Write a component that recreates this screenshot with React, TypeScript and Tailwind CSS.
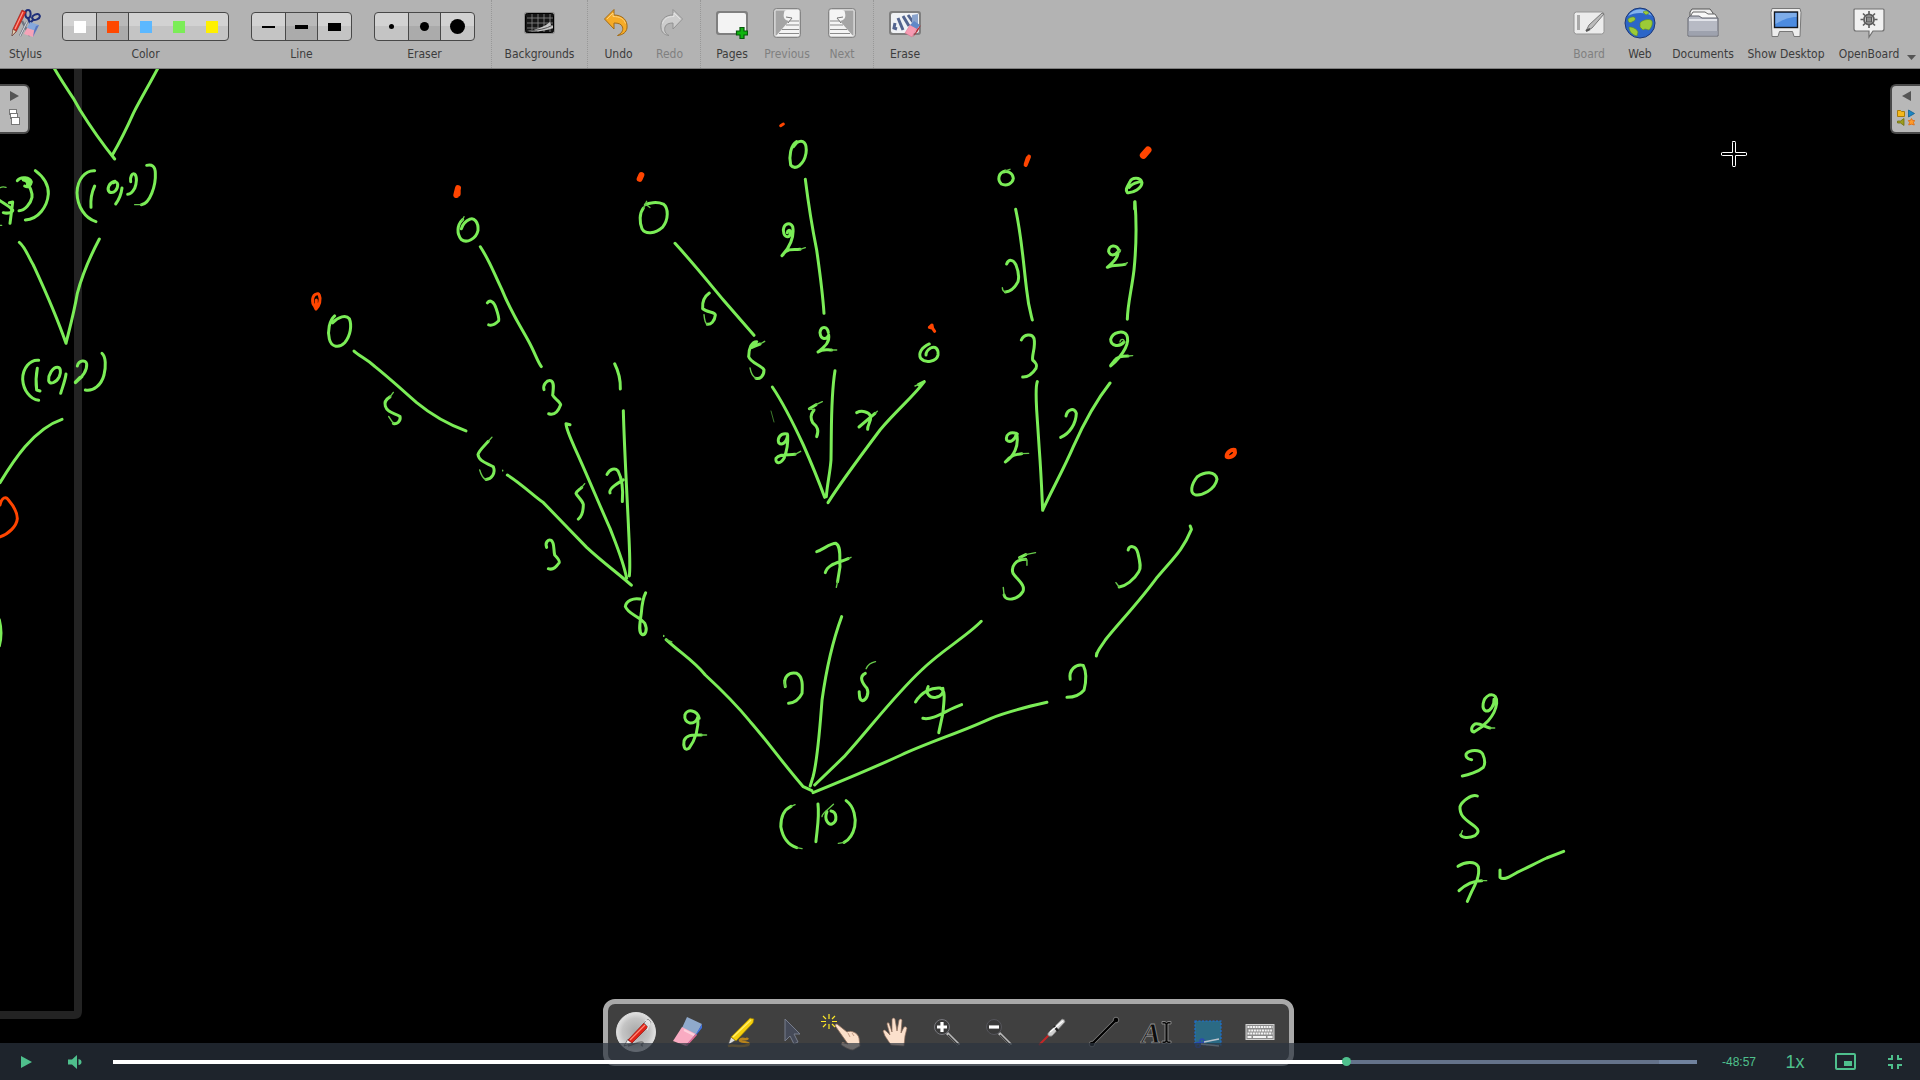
import type { ReactNode } from "react";

const GREEN = "#7bed57";
const RED = "#ff4500";

type Ink = { frame: string; green: string[]; thin?: string[]; red?: { d: string; w: number }[] };

const INK: Ink[] = [
  {
    frame: "translate(0 60) scale(.33333)",
    green: [
      "M160 20C180 55 200 85 220 115L240 150C265 190 290 230 344 297",
      "M476 20C450 70 420 120 400 160C380 205 360 245 337 285",
      "M0 422C15 432 30 440 38 450C40 456 25 462 10 458M28 428L38 426Q34 460 30 490",
      "M52 362C62 348 90 352 94 366C92 378 84 384 74 378M70 360C86 362 92 372 82 372M78 362C90 380 98 395 96 412C92 430 75 452 57 452",
      "M106 332C130 350 146 375 145 402C142 440 115 478 76 480",
      "M284 332C255 330 232 360 231 398C232 440 255 475 288 485",
      "M284 378C276 395 271 415 273 442",
      "M345 364C326 368 320 388 328 396C342 402 354 388 353 373C352 366 346 364 340 368M366 384C364 400 356 420 347 432",
      "M392 365C390 350 396 338 404 342C412 350 410 370 404 385C398 396 390 403 383 403",
      "M440 316C455 312 466 318 466 340C468 375 450 432 424 434",
      "M58 547C75 560 85 590 100 615C130 680 165 755 198 850C205 820 222 760 232 700C245 650 270 590 298 537",
      "M116 901C90 898 68 925 68 958C70 990 90 1018 116 1021",
      "M112 925C107 950 108 975 110 990L120 993",
      "M172 922C158 922 144 945 146 962C150 974 168 970 178 950C184 935 182 922 172 922",
      "M198 942C196 960 188 980 182 1000",
      "M232 918C236 900 258 898 260 912C262 930 248 952 226 968L246 950M226 966L240 952",
      "M306 880C318 890 318 920 312 945C304 975 280 995 256 990",
      "M186 1078C150 1090 110 1120 75 1160C45 1195 20 1235 0 1268",
    ],
    thin: ["M0 383Q8 379 18 382", "M0 496h5", "M404 434h20"],
  },
  {
    frame: "translate(0 470) scale(.33333 .389)",
    green: ["M-2 385Q8 420 -2 452"],
    red: [{ d: "M0 90C5 70 18 66 26 78C40 92 52 110 52 125C50 145 25 165 0 172", w: 3 }],
  },
  {
    frame: "translate(300 110) scale(.33333 .34437)",
    green: [
      "M104 598C88 612 82 640 88 665C94 690 118 692 134 676C152 655 156 625 148 606C138 594 115 600 98 618",
      "M162 700C180 716 200 722 225 745C270 780 310 815 350 850C400 890 450 915 498 932",
      "M270 833C258 840 252 848 256 860C262 880 285 880 300 890C304 905 288 914 280 910",
      "M488 318C470 335 470 360 484 376C500 388 528 375 534 350C536 325 522 312 510 317C498 322 488 332 484 345",
      "M541 397C570 440 580 470 605 520C630 580 650 610 685 670C705 705 712 730 724 745",
      "M562 560C570 550 582 556 588 575C594 592 598 605 596 612C590 618 580 628 566 624",
      "M732 812C728 798 740 784 752 786C764 790 760 810 758 828C764 840 780 845 782 856C776 872 765 888 746 882",
      "M810 914L798 911C800 935 820 970 840 1015C870 1080 900 1150 930 1215C950 1265 970 1310 980 1360",
      "M944 737C956 760 962 780 961 810",
      "M970 873C972 960 980 1100 985 1200C988 1270 992 1320 988 1353",
      "M565 962C550 978 538 988 534 1000C536 1020 560 1025 580 1036C588 1055 574 1072 558 1073",
      "M622 1060C670 1090 700 1120 730 1140C770 1180 820 1230 860 1270C910 1315 960 1350 994 1380",
      "M740 1270C734 1255 745 1246 754 1250C764 1258 760 1275 764 1292C772 1300 780 1308 778 1314C770 1325 760 1338 745 1332",
      "M845 1096C838 1103 830 1106 828 1113C832 1122 846 1132 850 1145C850 1165 846 1180 835 1188",
      "M921 1058C930 1042 945 1038 954 1048C966 1070 970 1100 967 1137M930 1112C925 1100 950 1085 970 1074",
      "M1020 1420C1000 1416 978 1425 976 1442C985 1465 1015 1468 1034 1490C1044 1510 1036 1526 1026 1523C1014 1515 1020 1490 1024 1460C1026 1435 1030 1415 1037 1402",
      "M1030 285C1018 300 1018 325 1026 345C1036 362 1065 360 1088 340C1106 318 1106 285 1090 273C1070 265 1045 270 1036 275",
    ],
    thin: [
      "M280 820L270 833M280 910L266 890",
      "M492 310L486 322",
      "M576 950L565 962M558 1073C546 1070 542 1055 539 1045",
      "M854 1085L845 1096",
      "M608 1046v2M1091 1526v2",
      "M1040 265L1030 285M1036 273L1050 283",
    ],
    red: [
      { d: "M50 534C36 536 34 560 44 570L48 578C58 570 64 550 58 538Q55 531 48 535M49 552V572", w: 3 },
      { d: "M474 227L469 247M473 231V243", w: 6 },
      { d: "M1024 189L1019 200", w: 6 },
    ],
  },
  {
    frame: "translate(680 110) scale(.33333)",
    green: [
      "M350 95C332 105 326 140 332 165C345 182 372 165 378 130C382 100 370 86 350 98L340 110",
      "M376 208C385 280 400 370 410 420C420 490 428 550 432 610",
      "M338 350C330 335 312 340 310 360C312 388 332 385 332 365C328 358 322 362 322 368M338 350C344 380 328 415 306 437M308 434C325 412 345 420 360 418",
      "M-15 400C40 460 80 510 130 570L222 676",
      "M88 549C72 560 66 575 68 596C80 608 105 605 106 615C104 635 92 644 82 643",
      "M240 702C230 706 225 708 216 712L230 695C215 695 206 715 206 740C212 760 245 765 252 780C252 800 238 808 228 805",
      "M445 668C442 646 422 648 420 668C422 690 440 690 446 675C450 700 430 712 414 726C430 715 440 720 455 720",
      "M465 782C452 860 455 940 453 1050C450 1090 442 1120 439 1160",
      "M277 831C310 880 340 940 370 1005C390 1050 415 1110 434 1162",
      "M322 972C300 968 292 985 296 998C305 1008 320 998 323 975C325 1010 318 1030 312 1045C300 1065 285 1060 288 1045C298 1030 325 1036 345 1033",
      "M402 900C390 915 392 925 398 938C412 950 418 960 410 980M388 896L408 884",
      "M748 702C725 712 714 730 722 745C735 760 770 756 774 735C776 715 765 708 752 714C742 720 738 728 738 735",
      "M733 815C700 860 650 900 600 960C540 1040 480 1120 444 1178M715 824L733 815",
      "M530 908C545 900 565 905 572 918C574 935 562 945 563 958M585 910L537 951",
    ],
    thin: [
      "M360 418L376 413",
      "M82 643C74 640 73 625 72 614",
      "M254 694L240 702M228 805C216 800 212 785 210 774",
      "M455 720H470",
      "M345 1033L362 1024",
      "M427 875L408 884M388 896L402 900",
      "M592 904L585 910",
      "M705 828L715 824",
    ],
    red: [
      { d: "M302 47L310 42", w: 3 },
      { d: "M748 652L756 645L758 655ZM758 655L764 664", w: 3 },
    ],
  },
  {
    frame: "translate(960 130) scale(.33333)",
    green: [
      "M136 123C114 128 112 150 124 162C140 170 158 160 160 145C158 128 142 122 130 126",
      "M545 155C540 140 515 142 510 155C502 170 494 180 502 188C520 190 545 175 546 158M540 155C530 158 515 160 508 172",
      "M167 238C185 320 190 400 200 480C205 530 212 550 217 570",
      "M140 402C146 386 160 388 168 405C176 425 178 440 174 455C165 472 150 485 136 486",
      "M525 215C530 280 528 360 522 420C515 480 503 520 502 568M524 215v22",
      "M478 364C470 340 445 345 446 365C450 378 465 378 474 365C476 385 455 400 442 412C460 402 480 408 495 403",
      "M184 630C192 612 216 610 222 625C228 650 215 675 218 690C230 700 232 706 228 715C218 730 205 742 188 741",
      "M492 636C480 652 452 650 452 628C458 605 490 600 500 615C510 635 495 670 452 708M452 706L465 690C472 678 490 678 504 678",
      "M232 755C226 770 228 800 230 840L238 960C244 1040 246 1100 248 1141C270 1090 310 1020 340 950C380 860 410 810 450 759",
      "M318 858C322 836 345 832 349 850C348 880 330 910 302 922",
      "M172 912C150 902 136 915 140 930C150 940 165 930 170 910C178 950 160 980 136 996C155 975 165 973 185 971",
      "M712 1040C692 1065 690 1090 705 1094C725 1098 765 1080 771 1048C766 1022 735 1025 712 1040",
    ],
    thin: [
      "M150 118L136 123",
      "M136 486C128 484 127 478 127 473",
      "M474 365L482 360M495 403L502 398",
      "M480 636C482 625 494 626 492 636M504 678L518 677",
      "M185 971L206 970",
    ],
    red: [
      { d: "M207 80L197 105M203 84L197 103", w: 4 },
      { d: "M564 60L550 76", w: 7 },
      { d: "M824 960C815 957 799 967 800 980C806 985 823 979 825 968Z", w: 4 },
    ],
  },
  {
    frame: "translate(640 500) scale(.40816 .33333)",
    green: [
      "M433 155C450 148 465 130 480 130C494 140 488 175 490 200L484 245M510 176C490 188 460 190 454 218",
      "M945 164L930 173M945 178C920 178 908 200 914 220C925 240 945 255 938 275C925 300 895 305 892 285",
      "M1196 150C1198 136 1215 134 1220 160C1226 190 1228 205 1222 215C1210 240 1190 258 1174 261",
      "M1348 78L1351 88C1330 150 1310 170 1265 235C1220 310 1165 380 1140 420C1130 440 1120 450 1118 468L1119 460",
      "M1054 538C1050 510 1068 490 1086 496C1096 520 1092 550 1088 570C1078 585 1065 592 1046 592",
      "M997 607C950 620 900 635 860 655C800 690 700 730 640 765C560 810 480 850 424 878",
      "M836 364C800 410 740 450 690 510C620 590 560 690 500 770L428 855",
      "M494 350C470 430 455 520 446 600C440 700 435 780 424 830L417 858",
      "M64 419C100 460 130 480 160 525C200 570 230 605 270 665C310 720 350 790 400 860L421 872",
      "M356 560C350 530 365 515 384 520C400 530 398 560 397 580C390 598 380 608 364 610",
      "M552 520C535 530 545 550 556 565C562 580 555 600 545 602C537 600 538 590 537 575",
      "M675 606C690 575 715 562 735 564C750 570 745 600 742 640L732 698M706 560C698 580 710 595 725 592C740 588 745 575 742 565M693 655C720 662 750 630 788 614",
      "M145 655C140 630 115 625 110 645C106 672 135 680 142 650C144 690 132 725 120 745C108 755 106 735 108 722C115 700 135 706 150 705",
      "M370 919C350 930 345 955 345 980C350 1015 365 1035 384 1043",
      "M436 912C440 950 434 985 431 1025",
      "M458 935C450 960 462 975 470 972C485 965 482 935 468 933",
      "M505 902C525 920 530 955 526 980C522 1002 512 1020 500 1027",
    ],
    thin: [
      "M517 172L510 176M484 245L481 262",
      "M969 158L945 164M930 173L948 180V196M892 285L890 262",
      "M1174 261L1166 248",
      "M78 426L64 419M58 407v2",
      "M577 485C565 488 558 495 554 506",
      "M356 560L352 542",
      "M150 705H163",
      "M380 914L370 919M384 1043L397 1046",
      "M474 913C460 930 445 940 446 950",
      "M500 1027L486 1030",
    ],
  },
  {
    frame: "translate(1400 660) scale(.33333)",
    green: [
      "M282 118C284 135 270 155 258 153C244 148 246 115 268 105C285 100 292 115 290 130C285 170 250 200 222 216C212 214 212 200 225 192C240 188 255 202 270 204",
      "M215 299C200 298 196 288 199 281C210 268 240 268 248 282C256 300 256 312 250 322C235 335 205 345 187 348",
      "M232 408C215 400 185 425 180 440C178 470 200 480 225 500C240 512 234 520 225 527C205 536 185 533 182 525",
      "M174 619C195 605 225 602 235 620C240 645 228 670 215 695L202 724M245 662C225 662 200 670 177 692",
      "M300 630L300 652C310 662 330 650 350 638C380 624 410 608 440 594L491 574",
    ],
    thin: ["M270 204H284", "M182 525L187 512", "M245 662H260"],
  },
];

function Board() {
  return (
    <svg
      className="absolute inset-0 h-full w-full"
      viewBox="0 69 1920 1011"
      preserveAspectRatio="xMinYMin slice"
      role="img"
      aria-label="Handwritten recursion tree for the amount 10 with coins 2, 3, 5 and 7"
      fill="none"
      strokeLinecap="round"
      strokeLinejoin="round"
    >
      <path d="M78 60V1011Q78 1015 74 1015H-10" stroke="#232323" strokeWidth="8" />
      <path d="M955 411L957 422" stroke="none" />
      {INK.map((ink) => (
        <g key={ink.frame} transform={ink.frame}>
          {ink.green.map((d) => (
            <path key={d} d={d} stroke={GREEN} strokeWidth="3" vectorEffect="non-scaling-stroke" />
          ))}
          {ink.thin?.map((d) => (
            <path key={d} d={d} stroke="#67c94a" strokeWidth="1.4" vectorEffect="non-scaling-stroke" />
          ))}
          {ink.red?.map((r) => (
            <path key={r.d} d={r.d} stroke={RED} strokeWidth={r.w} vectorEffect="non-scaling-stroke" />
          ))}
        </g>
      ))}
      <path d="M771 411L774 422" stroke="#3d7a2c" strokeWidth="1" />
      <path
        d="M1733 141.500h2q.5 0 .5 1v10h10q1 0 1 .5v2q0 .5-1 .5h-10v10q0 1-.5 1h-2q-.5 0-.5-1v-10h-10q-1 0-1-.5v-2q0-.5 1-.5h10v-10q0-1 .5-1z"
        fill="#000"
        stroke="#fff"
        strokeWidth="1"
      />
    </svg>
  );
}

function Icon({ children, className = "size-8" }: { children: ReactNode; className?: string }) {
  return (
    <svg viewBox="0 0 32 32" className={className} aria-hidden="true" fill="none">
      {children}
    </svg>
  );
}

const StylusIcon = () => (
  <Icon>
    <path d="M17 15L10 29M12 14l8 15" stroke="#6d7480" strokeWidth="2.400" />
    <path d="M17 15L10 29" stroke="#dfe3ea" strokeWidth="1" />
    <ellipse cx="18" cy="7" rx="2.600" ry="4" stroke="#1f2f7a" strokeWidth="2" />
    <ellipse cx="26" cy="10" rx="4" ry="2.600" transform="rotate(-25 26 10)" stroke="#1f2f7a" strokeWidth="2" />
    <path d="M18 11l2 5 4-4" stroke="#1f2f7a" strokeWidth="2.200" />
    <path d="M12 3l4 2L6 25l-4 4 1-7z" fill="#e23024" stroke="#8e1b14" strokeWidth=".6" />
    <path d="M13 5L5 22" stroke="#ff9c8f" strokeWidth="1.200" />
    <path d="M3 22l3 2.500L2 29z" fill="#e8d2b0" stroke="#444" strokeWidth=".5" />
    <path d="M20 15l9 3-3 6-9-3z" fill="#86a8dc" />
    <path d="M17 21l9 3-3 6-9-3z" fill="#f5a3b8" />
    <path d="M29 18l-6 12 1-6 2-5z" fill="#5877c0" />
  </Icon>
);

const BackgroundsIcon = () => (
  <Icon>
    <rect x="0" y="5" width="31" height="22" rx="3" fill="#8c8c8c" />
    <rect x="1.500" y="6.500" width="28" height="19" rx="2" fill="#161616" stroke="#000" />
    <path d="M3 11h26M3 16h26M3 21h26M8 7v18M14 7v18M20 7v18M26 7v18" stroke="#8a8a8a" strokeWidth=".8" />
    <path d="M3 24C12 23 20 20 26 15l1 3h2v3C22 24 12 25 3 24z" fill="#c4c4c4" />
    <path d="M5 24C14 23 22 22 29 18" stroke="#555" strokeWidth="1" />
  </Icon>
);

const UndoIcon = () => (
  <Icon>
    <path d="M1.500 12L11 2.500V8c8 0 14 5 13 13-.5 4-4 7-9.500 7.500 4-2 6-5 5-8.500-1-3-4-4-8.500-4v6z" fill="#f6ab27" stroke="#a06a18" strokeLinejoin="round" />
    <path d="M4 12l6-6v3.500c7 0 11 2.500 12.500 7" stroke="#ffd27a" strokeWidth="1" />
  </Icon>
);

const RedoIcon = () => (
  <Icon>
    <path d="M28.500 12L19 2.500V8C11 8 6 13 7 21c.5 4 3 7 8 7.500-4-2-5-5-4-8.500 1-3 4-4 8-4v6z" fill="#cdcdcd" stroke="#919191" strokeLinejoin="round" />
    <path d="M26 12l-6-6v3.500c-7 0-10 2.500-11.500 7" stroke="#e4e4e4" strokeWidth="1" />
  </Icon>
);

const PagesIcon = () => (
  <Icon>
    <rect x="0" y="4" width="32" height="24" rx="3" fill="#7f7f7f" />
    <rect x="2" y="6" width="28" height="20" rx="2" fill="#f3f3f3" />
    <path d="M24 20.500h4v3.500h3.500v4H28v3.500h-4V28h-3.500v-4H24z" fill="#0fb40f" stroke="#08590c" strokeWidth="1.200" />
  </Icon>
);

const PageTurnIcon = ({ flip = false }: { flip?: boolean }) => (
  <Icon>
    <g transform={flip ? "translate(32 0) scale(-1 1)" : undefined}>
      <rect x="2.500" y="1.500" width="27" height="29" rx="3" fill="#b9b9b9" stroke="#858585" />
      <rect x="4" y="3" width="24" height="26" rx="1" fill="#a5a5a5" stroke="#e8e8e8" />
      <path d="M16 3h12v26H5l13-15c-5-1-6-4-5-8 0-2 1-3 3-3z" fill="#f4f4f4" />
      <path d="M15 10l6 1-4 5" stroke="#777" />
      <path d="M18 14h10M15 18h13M11 22.500h17M8 26.500h20" stroke="#8b8b8b" strokeWidth="1" />
    </g>
  </Icon>
);

const EraseIcon = () => (
  <Icon>
    <rect x="0" y="4" width="32" height="24" rx="3" fill="#7f7f7f" />
    <rect x="2" y="6" width="28" height="20" rx="2" fill="#f0f2f5" />
    <path d="M6 16l-1 5 3 1M9 11l5 12M14 9l6 10M19 8l5 7" stroke="#53648f" strokeWidth="3" />
    <path d="M23 8l6-1v10l-6 3z" fill="#8ba4cd" />
    <path d="M21 18l7 3-5 9-7-4z" fill="#f79ab2" stroke="#d0708b" strokeWidth=".5" />
    <path d="M21 18l4-4 6 4-3 4z" fill="#6088c8" />
    <path d="M28 22l4-4-3 6-5 6z" fill="#b72c38" />
  </Icon>
);

const BoardIcon = () => (
  <Icon>
    <rect x="1" y="5" width="30" height="22" rx="2.500" fill="#ececec" stroke="#949494" />
    <path d="M4 8h3v15H4z" fill="#a9a9a9" />
    <path d="M13 24l3-6L29 6l2 1-12 14z" fill="#bcbcbc" stroke="#777" strokeWidth="1" />
    <path d="M13 24l4-2" stroke="#555" strokeWidth="2" />
  </Icon>
);

const WebIcon = () => (
  <Icon>
    <circle cx="16" cy="16" r="15" fill="#2c66c8" stroke="#1c3776" />
    <path d="M4 9a14 14 0 0 1 24 0c-5-4-18-4-24 0z" fill="#84b4ec" />
    <path d="M4 12c2-2 6-3 7-1s-1 3-3 4-4 1-4-3zM16 16c2-3 10-5 12-2 1 4-1 7-3 9l-4-1-2 1-3-3zM5 20c4 0 8 2 9 5l-1 4C8 28 5 24 5 20zM19 5c3-2 5-1 6 1l-3 2z" fill="#9ccb36" stroke="#5c8a26" strokeWidth=".6" />
  </Icon>
);

const DocumentsIcon = () => (
  <Icon>
    <path d="M3 5l2-3h18l3 4v8H3z" fill="#efefef" stroke="#555" />
    <path d="M4 8l2-3h12l3 2h7l2 3v5H4z" fill="#f8f8f8" stroke="#666" />
    <path d="M1 29V11l2-2h9l3 2h16v18z" fill="#b7bac4" stroke="#62646e" />
    <path d="M2 13h28" stroke="#e3e5eb" strokeWidth="2" />
    <path d="M1.500 24h29v4.500h-29z" fill="#9ea2ae" />
  </Icon>
);

const DesktopIcon = () => (
  <Icon>
    <path d="M2 1.500h28l1 4-1 24h-6l-1.500-5h-13L8 29.500H2L1 5.500z" fill="#ededed" stroke="#777" />
    <rect x="4.500" y="5" width="23" height="15.500" fill="#4c8be0" stroke="#15181e" strokeWidth="1.400" />
    <path d="M5.500 6h21v4c-8 0-14 3-21 7z" fill="#7eadea" />
  </Icon>
);

const GearIcon = () => (
  <Icon>
    <path d="M2 2h28q1 0 1 1v19q0 2-2 2H20l-4 6v-6H3q-2 0-2-2V3q0-1 1-1z" fill="#f1f1f1" stroke="#707070" strokeWidth="1.200" />
    <path d="M16 4v3M16 18v3M7.500 12.500h3M21.500 12.500h3M10 6.500l2 2M20 16.500l2 2M22 6.500l-2 2M12 16.500l-2 2" stroke="#5c5c5c" strokeWidth="1.600" />
    <circle cx="16" cy="12.500" r="5" fill="#c4c4c4" stroke="#5c5c5c" strokeWidth="1.800" />
    <rect x="13.500" y="10" width="5" height="5" fill="#8c8c8c" stroke="#555" />
  </Icon>
);

function ToolItem({ label, icon, width, dim = false }: { label: string; icon: ReactNode; width: string; dim?: boolean }) {
  return (
    <button type="button" disabled={dim} className={`flex shrink-0 flex-col items-center pt-[7px] ${width}`}>
      {icon}
      <span className={`mt-[7px] text-xs leading-4 whitespace-nowrap ${dim ? "text-[#808080]" : "text-[#3c3c3c]"}`}>{label}</span>
    </button>
  );
}

function Group({ label, cells }: { label: string; cells: { name: string; mark: string; on?: boolean }[] }) {
  return (
    <div role="group" aria-label={label} className="flex shrink-0 flex-col items-center pt-3">
      <div className="flex h-[29px] overflow-hidden rounded-[4px] border border-[#484848] bg-linear-to-b from-[#d2d2d2] from-50% to-[#c4c4c4] to-50%">
        {cells.map((c) => (
          <button
            key={c.name}
            type="button"
            aria-label={c.name}
            aria-pressed={!!c.on}
            className={`flex w-[33px] items-center justify-center ${c.on ? "border-x border-[#484848] bg-linear-to-b from-[#b9b9b9] from-50% to-[#ababab] to-50%" : ""}`}
          >
            <span className={c.mark} />
          </button>
        ))}
      </div>
      <span className="mt-[5px] text-xs leading-4 text-[#3c3c3c]">{label}</span>
    </div>
  );
}

const Divider = () => <div className="h-full w-0 shrink-0 border-l border-dotted border-[#989898]" />;

function Header() {
  return (
    <header className="relative z-10 flex h-[69px] shrink-0 justify-between border-b border-[#7d7d7d] bg-[#b3b3b3]">
      <div className="flex">
        <ToolItem label="Stylus" icon={<StylusIcon />} width="w-[51px]" />
        <div className="flex gap-[22px] pr-4 pl-[11px]">
          <Group
            label="Color"
            cells={[
              { name: "White", mark: "size-3 bg-white" },
              { name: "Red", mark: "size-3 bg-[#ff4800]", on: true },
              { name: "Blue", mark: "size-3 bg-[#5cb8ff]" },
              { name: "Green", mark: "size-3 bg-[#7bed57]" },
              { name: "Yellow", mark: "size-3 bg-[#fff000]" },
            ]}
          />
          <Group
            label="Line"
            cells={[
              { name: "Thin line", mark: "h-0.5 w-[13px] bg-black" },
              { name: "Medium line", mark: "h-1 w-[13px] bg-black", on: true },
              { name: "Thick line", mark: "h-2 w-[13px] bg-black" },
            ]}
          />
          <Group
            label="Eraser"
            cells={[
              { name: "Small eraser", mark: "size-[5px] rounded-full bg-black" },
              { name: "Medium eraser", mark: "size-[9px] rounded-full bg-black", on: true },
              { name: "Large eraser", mark: "size-[15px] rounded-full bg-black" },
            ]}
          />
        </div>
        <Divider />
        <ToolItem label="Backgrounds" icon={<BackgroundsIcon />} width="w-[95px]" />
        <Divider />
        <div className="flex px-[5px]">
          <ToolItem label="Undo" icon={<UndoIcon />} width="w-[51px]" />
          <ToolItem label="Redo" icon={<RedoIcon />} width="w-[51px]" dim />
        </div>
        <Divider />
        <div className="flex px-1">
          <ToolItem label="Pages" icon={<PagesIcon />} width="w-[54px]" />
          <ToolItem label="Previous" icon={<PageTurnIcon />} width="w-[56px]" dim />
          <ToolItem label="Next" icon={<PageTurnIcon flip />} width="w-[54px]" dim />
        </div>
        <Divider />
        <ToolItem label="Erase" icon={<EraseIcon />} width="w-[62px]" />
      </div>
      <div className="flex">
        <ToolItem label="Board" icon={<BoardIcon />} width="w-[52px]" dim />
        <ToolItem label="Web" icon={<WebIcon />} width="w-[50px]" />
        <ToolItem label="Documents" icon={<DocumentsIcon />} width="w-[76px]" />
        <ToolItem label="Show Desktop" icon={<DesktopIcon />} width="w-[90px]" />
        <ToolItem label="OpenBoard" icon={<GearIcon />} width="w-[76px]" />
        <button type="button" aria-label="More" className="flex w-[13px] items-end pb-2">
          <svg viewBox="0 0 9 5" className="h-[5px] w-[9px]" aria-hidden="true">
            <path d="M0 0h9L4.500 5z" fill="#555" />
          </svg>
        </button>
      </div>
    </header>
  );
}

const PALETTE: { name: string; icon: ReactNode }[] = [
  {
    name: "Pen",
    icon: (
      <svg viewBox="0 0 40 40" className="size-10" aria-hidden="true" fill="none">
        <defs>
          <radialGradient id="disc">
            <stop offset="0" stopColor="#a8a8a8" />
            <stop offset=".7" stopColor="#c4c4c4" />
            <stop offset="1" stopColor="#e2e2e2" />
          </radialGradient>
        </defs>
        <circle cx="20" cy="20" r="19.500" fill="url(#disc)" stroke="#ddd" />
        <path d="M12 34c6-1 10-5 14-4s-4 3 1 4" stroke="#777" strokeWidth="1.500" />
        <path d="M8 34l4-7 5 4z" fill="#eee" stroke="#555" strokeWidth=".7" />
        <path d="M12 28L28 11l4 4-16 16z" fill="#e02418" stroke="#8c1712" strokeWidth=".7" />
        <path d="M14 28l15-15" stroke="#ff8a7a" strokeWidth="1.200" />
        <path d="M28 11l4-4 3 3-3 5z" fill="#ddd" stroke="#777" strokeWidth=".7" />
        <path d="M29 8l5 3-3 7" stroke="#e8e8e8" strokeWidth="1.300" />
      </svg>
    ),
  },
  {
    name: "Eraser",
    icon: (
      <Icon>
        <path d="M15 1l15 7-6 11-14-7z" fill="#8fa9cb" />
        <path d="M10 11l14 7-10 12-13-5z" fill="#f9abc2" />
        <path d="M30 8v4L15 30l-2 0 11-12z" fill="#3f6fdc" />
        <path d="M24 18l1 1-10 11h-2z" fill="#e5688a" />
        <path d="M12 14l10 5" stroke="#fdd0dc" strokeWidth="2" />
      </Icon>
    ),
  },
  {
    name: "Marker",
    icon: (
      <Icon>
        <path d="M4 30c5-2 11 2 20-1 4-3-9-3-8-5 2-3 6 1 8-2" stroke="#b8831b" strokeWidth="2.500" />
        <path d="M4 29l3-8 5 3z" fill="#ddd" stroke="#444" strokeWidth=".6" />
        <path d="M7 21L26 2l4 1-1 4-17 18z" fill="#f5cf0d" stroke="#8b7205" strokeWidth=".7" />
        <path d="M9 21L27 4" stroke="#ffef70" strokeWidth="1.300" />
      </Icon>
    ),
  },
  {
    name: "Selector",
    icon: (
      <Icon>
        <path d="M9 3v22l5-5 4 8 4-2-4-8h6z" fill="#454a58" stroke="#777d8c" strokeLinejoin="round" />
      </Icon>
    ),
  },
  {
    name: "Pointer",
    icon: (
      <svg viewBox="3 0 42 36" className="h-9 w-[42px] overflow-visible" aria-hidden="true" fill="none">
        <path d="M16 13q-2-3 1-3l10 8c4-2 11 1 12 6l1 8-7 4c-3 0-7-2-10-4-3-1-2-4 1-3l4 1z" fill="#fbdfc9" stroke="#8e6e5c" strokeWidth=".8" />
        <path d="M28 19l2 4M32 19l2 3" stroke="#c79d86" />
        <path d="M9 0v5M9 10v5M1 7.500h5M12 7.500h5M3 2l3 3M15 2l-3 3M3 13l3-3M12 10l3 3" stroke="#ffe928" strokeWidth="1.200" />
      </svg>
    ),
  },
  {
    name: "Hand",
    icon: (
      <Icon>
        <path d="M11 29L5 20l-2-5q1-2 3 0l4 4L7 8q0-2 2-1l3 9V3q2-2 3 0l2 12 2-11q2-2 3 0l-1 13 3-6q2-1 3 1l-2 8-1 10z" fill="#fbe0cc" stroke="#8e6e5c" strokeWidth=".7" />
      </Icon>
    ),
  },
  {
    name: "Zoom in",
    icon: (
      <Icon>
        <path d="M15 17l12 12" stroke="#b9b9b9" strokeWidth="3" />
        <path d="M16 19l11 11" stroke="#3a3a3a" strokeWidth="1.200" />
        <circle cx="10" cy="11" r="7.500" fill="#3a3a3a" stroke="#77777d" strokeWidth="1" />
        <path d="M10 6v10M5 11h10" stroke="#fff" strokeWidth="3.200" />
      </Icon>
    ),
  },
  {
    name: "Zoom out",
    icon: (
      <Icon>
        <path d="M15 17l12 12" stroke="#b9b9b9" strokeWidth="3" />
        <path d="M16 19l11 11" stroke="#3a3a3a" strokeWidth="1.200" />
        <circle cx="10" cy="11" r="7.500" fill="#3a3a3a" stroke="#55555b" strokeWidth="1" />
        <path d="M5 11h10" stroke="#fff" strokeWidth="3.200" />
      </Icon>
    ),
  },
  {
    name: "Laser pointer",
    icon: (
      <Icon>
        <path d="M3 29l10-10" stroke="#c42626" strokeWidth="2" />
        <path d="M12 17L26 3q3 0 3 3L16 20q-5 1-4-3z" fill="#cfcfcf" stroke="#777" strokeWidth=".8" />
        <path d="M18 10l4 5" stroke="#222" strokeWidth="2.500" />
        <path d="M14 16L27 5" stroke="#fff" strokeWidth="1.200" />
      </Icon>
    ),
  },
  {
    name: "Line",
    icon: (
      <Icon>
        <path d="M4 28L28 4" stroke="#8a8a8a" strokeWidth="3.600" />
        <circle cx="4" cy="28" r="2.800" fill="#000" stroke="#8a8a8a" strokeWidth=".8" />
        <circle cx="28" cy="4" r="2.800" fill="#000" stroke="#8a8a8a" strokeWidth=".8" />
        <path d="M4 28L28 4" stroke="#000" strokeWidth="2.400" />
      </Icon>
    ),
  },
  {
    name: "Text",
    icon: (
      <Icon>
        <text x="1" y="27" fontFamily="Liberation Serif, serif" fontStyle="italic" fontWeight="700" fontSize="30" fill="#0c0c0c" stroke="#8d8d8d" strokeWidth=".8">
          A
        </text>
        <path d="M22 5.500h3l1.500 1 1.500-1h3V8h-3v17h3v2.500h-3l-1.500-1-1.500 1h-3V25h3V8h-3z" fill="#0c0c0c" stroke="#999" strokeWidth=".8" />
      </Icon>
    ),
  },
  {
    name: "Capture",
    icon: (
      <Icon>
        <rect x="3" y="5" width="26" height="24" fill="#2b6a84" stroke="#1b6fd8" strokeWidth="1.200" strokeDasharray="2 1.500" />
        <circle cx="6" cy="29" r="2.500" stroke="#2b49b0" strokeWidth="1.500" />
        <circle cx="10" cy="25" r="2" stroke="#2b49b0" strokeWidth="1.500" />
        <path d="M12 26l15-3M9 28l18 2" stroke="#b9c3cc" strokeWidth="1.500" />
      </Icon>
    ),
  },
  {
    name: "Keyboard",
    icon: (
      <Icon>
        <rect x="2" y="8.500" width="28" height="15" fill="#8c8c8c" stroke="#cfcfcf" />
        <path d="M3.500 11h25M4.500 14.500h24M3.500 17.500h25" stroke="#f4f4f4" strokeWidth="2" strokeDasharray="2 .7" />
        <path d="M3.500 21h4M9 21h13M23.500 21h5" stroke="#f4f4f4" strokeWidth="2" />
      </Icon>
    ),
  },
];

function Palette() {
  return (
    <div className="absolute inset-x-0 bottom-3.5 flex justify-center pr-[23px]">
      <div role="toolbar" aria-label="Drawing tools" className="flex h-[67px] items-center rounded-xl border-[5px] border-[#a9a9a9] bg-[#404040] pr-[3px] pb-0.5 pl-0.5">
        {PALETTE.map((t) => (
          <button key={t.name} type="button" aria-label={t.name} className="flex w-[52px] items-center justify-center">
            {t.icon}
          </button>
        ))}
      </div>
    </div>
  );
}

function Player() {
  return (
    <footer className="absolute inset-x-0 bottom-0 flex h-[37px] items-center bg-[#2b333f]/70 text-[#4fc08d]">
      <button type="button" aria-label="Play" className="ml-[21px]">
        <svg viewBox="0 0 11 12" className="h-3 w-[11px]" fill="currentColor" aria-hidden="true">
          <path d="M0 0l11 6-11 6z" />
        </svg>
      </button>
      <button type="button" aria-label="Mute" className="mr-[31px] ml-9">
        <svg viewBox="0 0 14 14" className="size-3.5" fill="currentColor" aria-hidden="true">
          <path d="M0 4.500h4L9 0v14L4 9.500H0zM10.500 4q3 .5 3 3t-3 3z" />
        </svg>
      </button>
      <input
        type="range"
        aria-label="Seek"
        min={0}
        max={1000}
        defaultValue={780}
        className="h-1 min-w-0 flex-1 appearance-none bg-[linear-gradient(to_right,#fff_77.8%,#64728a_77.8%,#64728a_97.6%,#70829e_97.6%)] [&::-webkit-slider-thumb]:size-[9px] [&::-webkit-slider-thumb]:appearance-none [&::-webkit-slider-thumb]:rounded-full [&::-webkit-slider-thumb]:bg-[#4fc08d]"
      />
      <span className="ml-[25px] w-[37px] text-xs leading-4">-48:57</span>
      <button type="button" className="ml-[26px] w-5 text-lg leading-5">
        1x
      </button>
      <button type="button" aria-label="Picture in picture" className="ml-[30px]">
        <svg viewBox="0 0 21 17" className="h-[17px] w-[21px]" fill="none" aria-hidden="true">
          <rect x="1" y="1" width="19" height="15" rx="1" stroke="currentColor" strokeWidth="2" />
          <path d="M9 8h8v5H9z" fill="currentColor" />
        </svg>
      </button>
      <button type="button" aria-label="Exit full screen" className="mr-[18px] ml-8">
        <svg viewBox="0 0 14 14" className="size-3.5" fill="none" stroke="currentColor" strokeWidth="2" aria-hidden="true">
          <path d="M0 4h4V0M10 0v4h4M14 10h-4v4M4 14v-4H0" />
        </svg>
      </button>
    </footer>
  );
}

export default function App() {
  return (
    <div className="flex h-screen flex-col overflow-hidden bg-black font-['Liberation_Sans',sans-serif]">
      <div className="contents font-['DejaVu_Sans_Condensed','Noto_Sans',sans-serif]">
        <Header />
      </div>
      <main className="relative min-h-0 flex-1">
        <Board />
        <button
          type="button"
          aria-label="Open page panel"
          className="absolute top-[15px] left-0 flex h-[50px] w-[30px] flex-col items-center gap-2 rounded-r-md border-2 border-l-0 border-[#4a4a4a] bg-[#b8b8b8] pt-[5px]"
        >
          <svg viewBox="0 0 9 10" className="h-2.5 w-[9px]" aria-hidden="true">
            <path d="M0 0l9 5-9 5z" fill="#555" />
          </svg>
          <svg viewBox="0 0 12 16" className="h-4 w-3" fill="#fff" stroke="#777" aria-hidden="true">
            <rect x="1.500" y=".5" width="7" height="5" />
            <rect x="2.500" y="4.500" width="7" height="5" />
            <rect x="3.500" y="8.500" width="8" height="7" />
          </svg>
        </button>
        <button
          type="button"
          aria-label="Open library panel"
          className="absolute top-[15px] right-0 flex h-[50px] w-[30px] flex-col items-center gap-2 rounded-l-md border-2 border-r-0 border-[#4a4a4a] bg-[#b8b8b8] pt-[5px]"
        >
          <svg viewBox="0 0 9 10" className="h-2.5 w-[9px]" aria-hidden="true">
            <path d="M9 0L0 5l9 5z" fill="#555" />
          </svg>
          <svg viewBox="0 0 18 17" className="h-[17px] w-[18px]" aria-hidden="true">
            <path d="M.5 1.500h3l1 1h3v5h-7z" fill="#f5b81c" stroke="#a87c0c" />
            <path d="M11.500 1v7l6-3.500z" fill="#1c86c4" stroke="#0c5f92" strokeWidth=".8" />
            <path d="M.5 12h3l3.500-2.500v7L3.500 14h-3z" fill="#9d9c1c" stroke="#6f6e10" strokeWidth=".8" />
            <path d="M14.500 9.500l1.200 2h2l-1.200 2 .8 2.500-2.800-.8-2.800.8.800-2.500-1.200-2h2z" fill="#ff9a2a" stroke="#d96a10" strokeWidth=".8" />
          </svg>
        </button>
        <Palette />
        <Player />
      </main>
    </div>
  );
}
